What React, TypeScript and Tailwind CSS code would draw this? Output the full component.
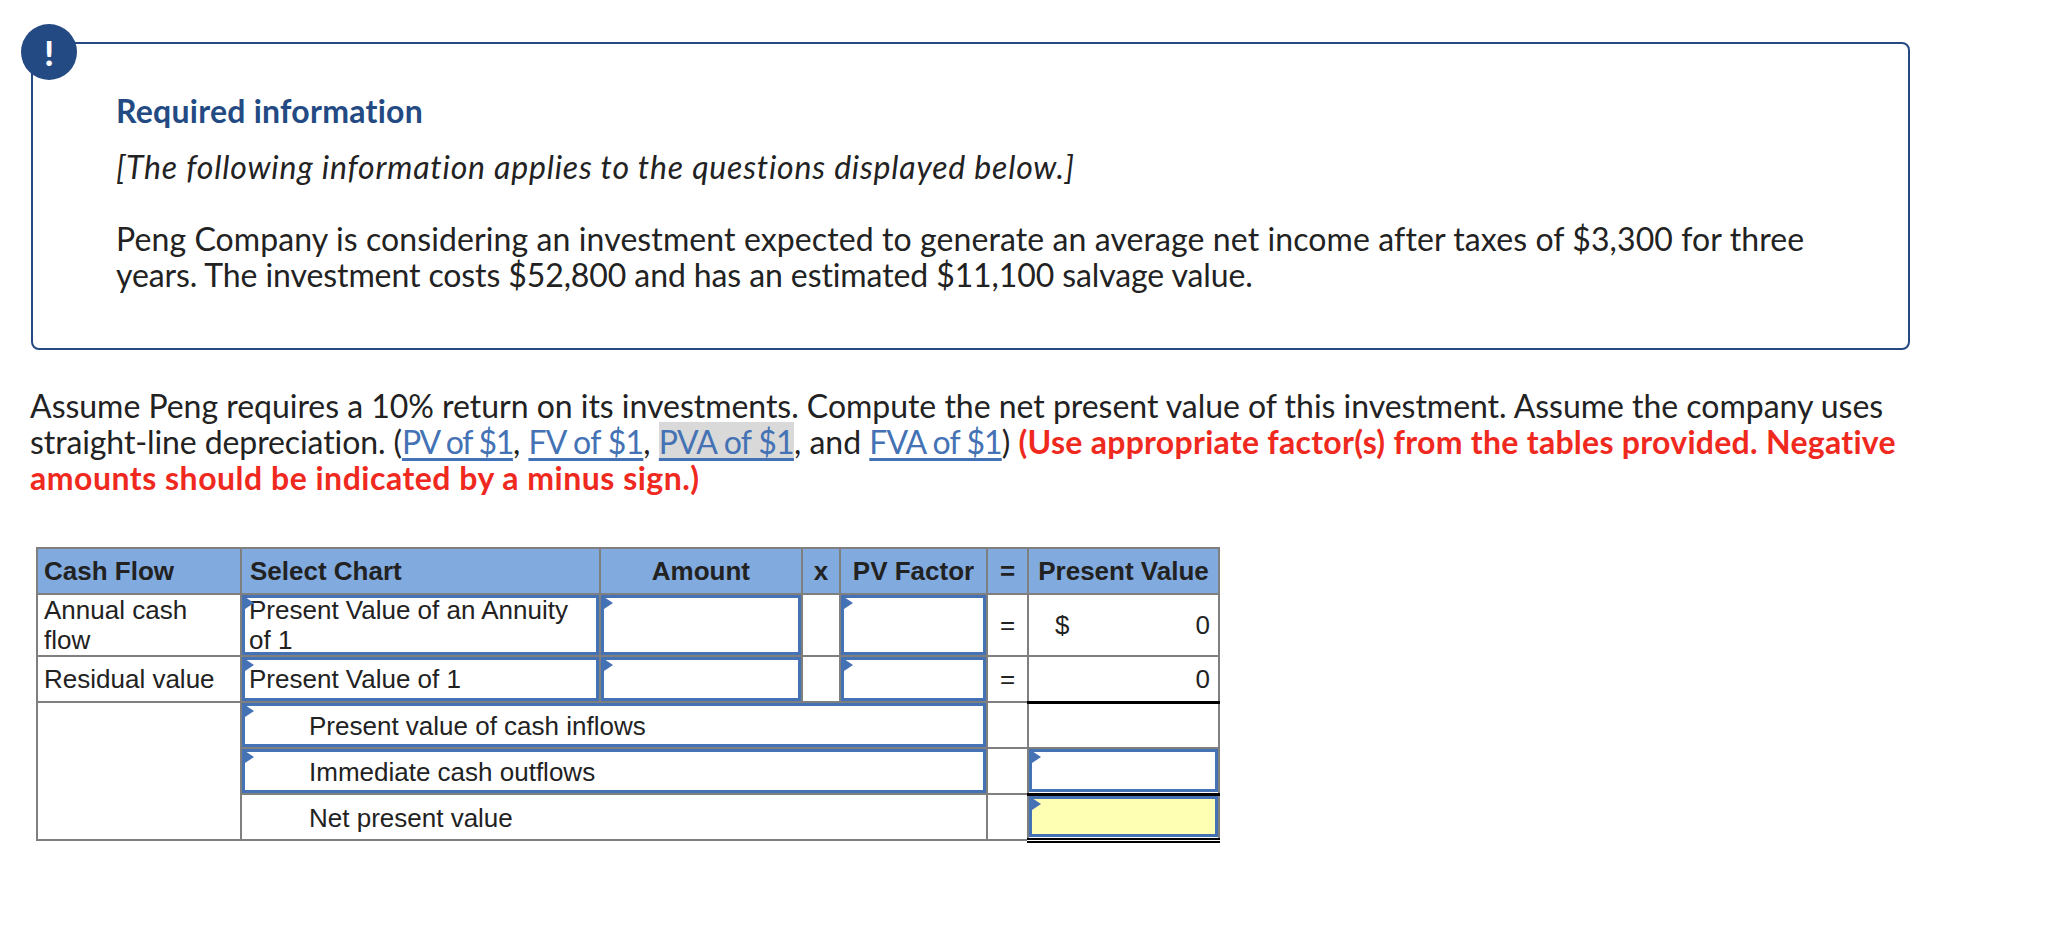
import React from 'react'

const BORDER = 'border-2 border-[#7f7f7f]'
const FONT = "font-['Lato','Open_Sans',sans-serif] [font-variant-ligatures:none]"
const LINK = 'text-[#4472b4] underline underline-offset-[4px] tracking-[-0.7px]'

const Marker = () => (
  <span className="absolute -left-[3px] -top-[3px] h-0 w-0 border-y-[8px] border-l-[12px] border-y-transparent border-l-[#4472b4]" />
)

const InputCell: React.FC<{
  colSpan?: number
  children?: React.ReactNode
  innerClassName?: string
}> = ({ colSpan, children, innerClassName = 'h-[44px]' }) => (
  <td colSpan={colSpan} className={`${BORDER} p-0`}>
    <div className={`relative border-[3px] border-[#4472b4] ${innerClassName}`}>
      <Marker />
      {children}
    </div>
  </td>
)

const headCell = `${BORDER} bg-[#81aadf] font-bold px-2`

export default function App() {
  return (
    <div className="min-h-[936px] bg-white pt-[42px] pl-[31px] text-[#222222]">
      <div className="relative w-[1879px] h-[308px] rounded-lg border-2 border-[#234a83] pl-[83px] pt-[49px]">
        <div className="absolute -left-[12px] -top-[20px] flex h-[56px] w-[56px] items-center justify-center rounded-full bg-[#234a83] font-['Lato',sans-serif] text-[34px] font-black text-white">
          !
        </div>
        <div className={`${FONT} text-[32px] leading-[36px]`}>
          <h2 className="font-bold tracking-[0.25px] text-[#234a83]">Required information</h2>
          <p className="mt-[20px] italic tracking-[0.8px]">[The following information applies to the questions displayed below.]</p>
          <p className="mt-[36px]">
            <span className="tracking-[0.1px]">
              Peng Company is considering an investment expected to generate an average net income after taxes of $3,300 for three
            </span>
            <br />
            <span className="tracking-[-0.1px]">
              years. The investment costs $52,800 and has an estimated $11,100 salvage value.
            </span>
          </p>
        </div>
      </div>

      <p className={`${FONT} mt-[38px] text-[32px] leading-[36px] -ml-[1px]`}>
        <span className="tracking-[-0.03px]">
          Assume Peng requires a 10% return on its investments. Compute the net present value of this investment. Assume the company uses
        </span>
        <br />
        <span className="tracking-[-0.1px]">straight-line depreciation. (</span>
        <a className={`${LINK} !tracking-[-1.3px]`}>PV of $1</a>, <a className={LINK}>FV of $1</a>,{' '}
        <a className={`${LINK} bg-[#d9d9d9]`}>PVA of $1</a>, and <a className={`${LINK} !tracking-[-0.9px]`}>FVA of $1</a>){' '}
        <b className="text-[#f0291f] tracking-[0.28px]">
          (Use appropriate factor(s) from the tables provided. Negative
          <br />
          <span className="tracking-[0.5px]">amounts should be indicated by a minus sign.)</span>
        </b>
      </p>

      <table className="mt-[51px] ml-[5px] w-[1182px] table-fixed border-collapse font-['Liberation_Sans',Arial,sans-serif] text-[26px] leading-[30px]">
        <colgroup>
          <col className="w-[204px]" />
          <col className="w-[359px]" />
          <col className="w-[202px]" />
          <col className="w-[38px]" />
          <col className="w-[147px]" />
          <col className="w-[41px]" />
          <col className="w-[191px]" />
        </colgroup>
        <tbody>
          <tr className="h-[46px]">
            <th className={`${headCell} text-left !pl-[6px]`}>Cash Flow</th>
            <th className={`${headCell} text-left`}>Select Chart</th>
            <th className={`${headCell} text-right pr-[51px]`}>Amount</th>
            <th className={`${headCell} text-center !px-0`}>x</th>
            <th className={`${headCell} text-center !px-0`}>PV Factor</th>
            <th className={`${headCell} text-center !px-0`}>=</th>
            <th className={`${headCell} text-center !px-0`}>Present Value</th>
          </tr>
          <tr className="h-[62px]">
            <td className={`${BORDER} pl-[6px] pr-2`}>
              Annual cash
              <br />
              flow
            </td>
            <InputCell innerClassName="h-[60px] pl-[4px]">
              <div className="-mt-[3px]">
                Present Value of an Annuity
                <br />
                of 1
              </div>
            </InputCell>
            <InputCell innerClassName="h-[60px]" />
            <td className={BORDER} />
            <InputCell innerClassName="h-[60px]" />
            <td className={`${BORDER} text-center`}>=</td>
            <td className={`${BORDER} px-2`}>
              <div className="flex justify-between pl-[18px]">
                <span>$</span>
                <span>0</span>
              </div>
            </td>
          </tr>
          <tr className="h-[46px]">
            <td className={`${BORDER} pl-[6px] pr-2`}>Residual value</td>
            <InputCell innerClassName="h-[44px] pl-[4px] flex items-center">Present Value of 1</InputCell>
            <InputCell />
            <td className={BORDER} />
            <InputCell />
            <td className={`${BORDER} text-center`}>=</td>
            <td className="border-x-2 border-t-2 border-b-[3px] border-x-[#7f7f7f] border-t-[#7f7f7f] border-b-black px-2 text-right">0</td>
          </tr>
          <tr className="h-[46px]">
            <td rowSpan={3} className={BORDER} />
            <InputCell colSpan={4} innerClassName="h-[44px] pl-[64px] pt-[2px] flex items-center">Present value of cash inflows</InputCell>
            <td className={BORDER} />
            <td className={BORDER} />
          </tr>
          <tr className="h-[46px]">
            <InputCell colSpan={4} innerClassName="h-[44px] pl-[64px] pt-[2px] flex items-center">Immediate cash outflows</InputCell>
            <td className={BORDER} />
            <td className="border-x-2 border-t-2 border-b-[3px] border-x-[#7f7f7f] border-t-[#7f7f7f] border-b-black p-0">
              <div className="relative h-[43px] border-[3px] border-[#4472b4]">
                <Marker />
              </div>
            </td>
          </tr>
          <tr className="h-[46px]">
            <td colSpan={4} className={`${BORDER} pl-[67px] pt-[2px]`}>Net present value</td>
            <td className={BORDER} />
            <td className="border-x-2 border-x-[#7f7f7f] border-b-[5px] border-double border-b-black p-0">
              <div className="relative h-[41px] border-[3px] border-[#4472b4] bg-[#ffffb3]">
                <Marker />
              </div>
            </td>
          </tr>
        </tbody>
      </table>
    </div>
  )
}
